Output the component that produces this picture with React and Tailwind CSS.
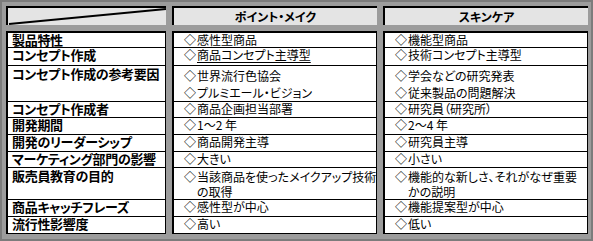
import React from 'react';

const rows = [
  { label: '製品特性', make: ['感性型商品'], skin: ['機能型商品'] },
  { label: 'コンセプト作成', make: ['商品コンセプト主導型'], skin: ['技術コンセプト主導型'], underline: true },
  { label: 'コンセプト作成の参考要因', make: ['世界流行色協会', 'プルミエール・ビジョン'], skin: ['学会などの研究発表', '従来製品の問題解決'] },
  { label: 'コンセプト作成者', make: ['商品企画担当部署'], skin: ['研究員（研究所）'] },
  { label: '開発期間', make: ['1～2 年'], skin: ['2～4 年'] },
  { label: '開発のリーダーシップ', make: ['商品開発主導'], skin: ['研究員主導'] },
  { label: 'マーケティング部門の影響', make: ['大きい'], skin: ['小さい'] },
  { label: '販売員教育の目的', make: [['当該商品を使ったメイクアップ技術', 'の取得']], skin: [['機能的な新しさ、それがなぜ重要', 'かの説明']] },
  { label: '商品キャッチフレーズ', make: ['感性型が中心'], skin: ['機能提案型が中心'] },
  { label: '流行性影響度', make: ['高い'], skin: ['低い'] },
];

// row heights in px, border included
const heights = [17, 18, 36, 16, 17, 17, 16, 32, 17, 17];

function Item({ text, underline, leading }) {
  const lines = Array.isArray(text) ? text : [text];
  return (
    <div className={`flex whitespace-nowrap ${leading}`}>
      <span className="w-[13px] shrink-0 text-[12px] [font-feature-settings:normal]">◇</span>
      <span className={underline ? 'underline underline-offset-2' : ''}>
        {lines.map((l, i) => (
          <span key={i} className="block">{l}</span>
        ))}
      </span>
    </div>
  );
}

function Cell({ first, className, children, height }) {
  return (
    <div
      className={`bg-white border-l-2 border-r border-b border-black ${first ? 'border-t-2' : ''} ${className}`}
      style={{ height }}
    >
      {children}
    </div>
  );
}

export default function App() {
  return (
    <div
      className="w-[593px] h-[241px] bg-[#9c9c9c] border-2 border-[#7c7c7c] pl-[4px] pt-[4px] pr-[3px] text-black [font-feature-settings:'palt']"
      style={{ fontFamily: '"Noto Sans CJK JP", "Noto Sans", sans-serif' }}
    >
      {/* header */}
      <div className="grid grid-cols-[160px_205px_205px] gap-x-[6px] h-[19px]">
        <div className="bg-[#e4e4e4] border-t-2 border-l-2 border-black">
          <svg width="158" height="17" viewBox="0 0 158 17" className="block">
            <line x1="1" y1="16" x2="158" y2="1" stroke="black" strokeWidth="2" />
          </svg>
        </div>
        <div className="bg-[#e4e4e4] border-t-2 border-l-2 border-black flex items-center justify-center text-[12px] font-bold leading-none">
          ポイント・メイク
        </div>
        <div className="bg-[#e4e4e4] border-t-2 border-l-2 border-black flex items-center justify-center text-[12px] font-bold leading-none">
          スキンケア
        </div>
      </div>

      {/* body */}
      <div className="grid grid-cols-[160px_205px_205px] gap-x-[6px] mt-[6px]">
        {rows.map((r, i) => {
          const first = i === 0;
          const h = heights[i];
          const double = h > 30;
          const leading = double ? (h > 34 ? 'leading-[17px]' : 'leading-[15px]') : 'leading-[14px]';
          return (
            <React.Fragment key={r.label}>
              <Cell first={first} height={h} className={`pl-[4px] text-[13px] font-bold tracking-[-0.3px] whitespace-nowrap leading-[14px] ${double ? 'pt-[1px]' : ''}`}>
                {r.label}
              </Cell>
              <Cell first={first} height={h} className={`pl-[10px] text-[12px] ${double ? 'pt-[1px]' : ''}`}>
                {r.make.map((t, j) => (
                  <Item key={j} text={t} underline={r.underline} leading={leading} />
                ))}
              </Cell>
              <Cell first={first} height={h} className={`pl-[10px] text-[12px] ${double ? 'pt-[1px]' : ''}`}>
                {r.skin.map((t, j) => (
                  <Item key={j} text={t} leading={leading} />
                ))}
              </Cell>
            </React.Fragment>
          );
        })}
      </div>
    </div>
  );
}
